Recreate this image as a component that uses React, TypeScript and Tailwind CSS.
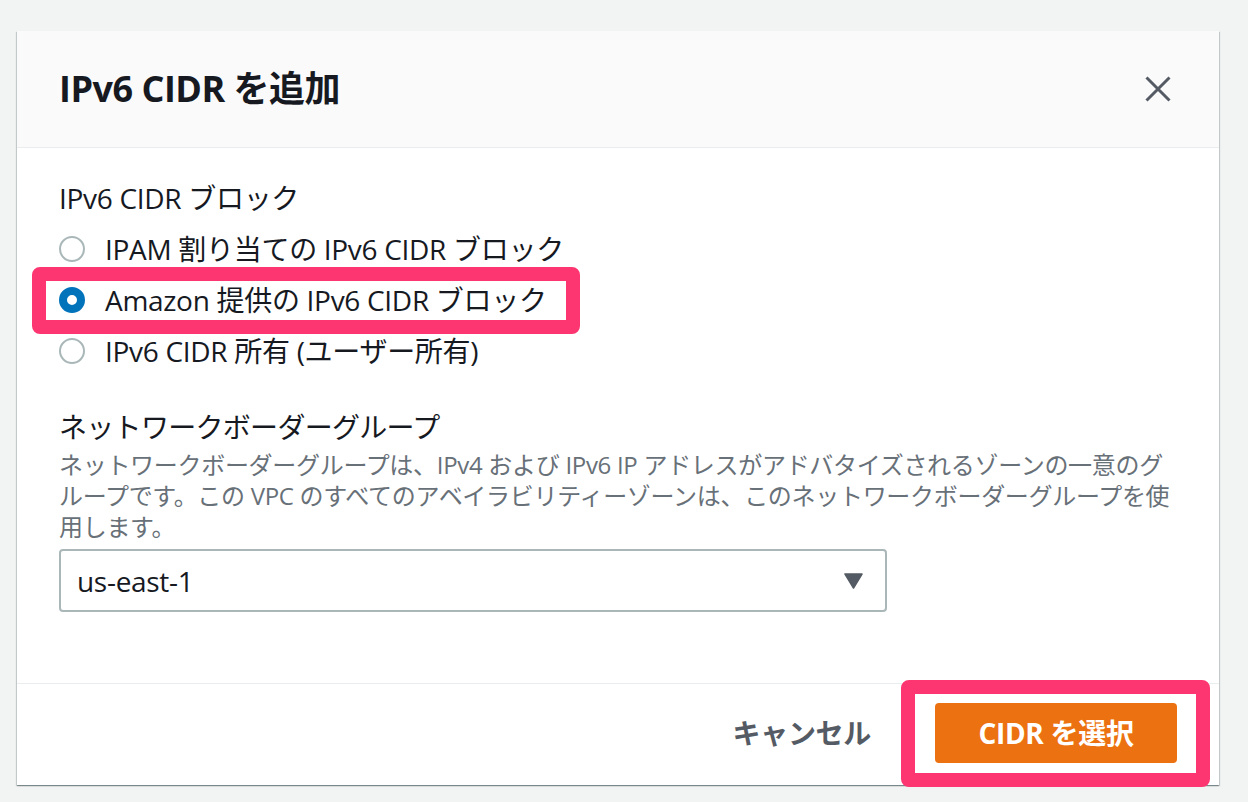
const RadioOption = ({ label, checked }: { label: string; checked?: boolean }) => (
  <div className="flex h-[51px] items-center">
    {checked ? (
      <span className="h-[26px] w-[26px] shrink-0 rounded-full border-[8px] border-[#0073bb] bg-white" />
    ) : (
      <span className="h-[26px] w-[26px] shrink-0 rounded-full border-2 border-[#aab7b8] bg-white" />
    )}
    <span className="ml-[20px] text-[28px] leading-[44px] tracking-[-0.3px] text-[#16191f]">{label}</span>
  </div>
);

const App = () => {
  return (
    <div className="h-screen w-full bg-[#f2f3f3] pl-[17px] pt-[31px] font-['Open_Sans','Noto_Sans_CJK_JP',sans-serif]">
      <div className="flex h-[754px] w-[1202px] flex-col bg-white shadow-[0_1px_1px_0_rgba(0,28,36,0.3),1px_1px_1px_0_rgba(0,28,36,0.15),-1px_1px_1px_0_rgba(0,28,36,0.15)]">
        {/* Header */}
        <div className="flex h-[117px] shrink-0 items-center justify-between border-b border-[#eaeded] bg-[#fafafa] pl-[42px] pr-[48px]">
          <h2 className="text-[36px] font-bold leading-[44px] tracking-[-0.5px] text-[#16191f]">IPv6 CIDR を追加</h2>
          <button aria-label="閉じる" className="text-[#545b64]">
            <svg width="26" height="26" viewBox="0 0 26 26" fill="none" stroke="currentColor" strokeWidth="3">
              <path d="M1.5 1.5 L24.5 24.5 M24.5 1.5 L1.5 24.5" />
            </svg>
          </button>
        </div>

        {/* Body */}
        <div className="flex-1 pl-[42px] pr-[43px] pt-[28px] text-[#16191f]">
          <div className="text-[28px] leading-[44px] tracking-[-0.3px]">IPv6 CIDR ブロック</div>
          <div className="mt-[3px]">
            <RadioOption label="IPAM 割り当ての IPv6 CIDR ブロック" />
            <div className="relative">
              <RadioOption label="Amazon 提供の IPv6 CIDR ブロック" checked />
              <span className="pointer-events-none absolute bottom-[-9px] left-[-27px] top-[-7px] w-[548px] rounded-[8px] border-[14px] border-[#fd3570]" />
            </div>
            <RadioOption label="IPv6 CIDR 所有 (ユーザー所有)" />
          </div>

          <div className="mt-[30px] text-[28px] leading-[43px] tracking-[-0.7px]">ネットワークボーダーグループ</div>
          <p className="whitespace-nowrap text-[24px] leading-[31px] tracking-[-0.3px] text-[#687078]">
            ネットワークボーダーグループは、IPv4 および IPv6 IP アドレスがアドバタイズされるゾーンの一意のグ
            <br />
            ループです。この VPC のすべてのアベイラビリティーゾーンは、このネットワークボーダーグループを使
            <br />
            用します。
          </p>

          <div className="mt-[7px] flex h-[63px] w-[828px] items-center justify-between rounded-[4px] border-2 border-[#aab7b8] pl-[16px] pr-[22px]">
            <span className="text-[28px] leading-[44px] tracking-[-0.3px] text-[#16191f]">us-east-1</span>
            <svg width="19" height="16" viewBox="0 0 19 16" className="text-[#545b64]">
              <path d="M1 1 L18 1 L9.5 15 Z" fill="currentColor" stroke="currentColor" strokeWidth="1.5" strokeLinejoin="round" />
            </svg>
          </div>
        </div>

        {/* Footer */}
        <div className="flex h-[102px] shrink-0 justify-end border-t border-[#eaeded] pr-[42px] pt-[19px]">
          <div className="flex h-[60px] items-center">
            <button className="mr-[64px] text-[28px] font-bold leading-[44px] tracking-[-0.3px] text-[#545b64]">キャンセル</button>
            <div className="relative">
              <button className="h-[60px] w-[242px] rounded-[4px] bg-[#ec7211] text-[28px] font-bold leading-[44px] tracking-[-0.3px] text-white">
                CIDR を選択
              </button>
              <span className="pointer-events-none absolute bottom-[-24px] left-[-34px] right-[-33px] top-[-23px] rounded-[8px] border-[14px] border-[#fd3570]" />
            </div>
          </div>
        </div>
      </div>
    </div>
  );
};

export default App;
